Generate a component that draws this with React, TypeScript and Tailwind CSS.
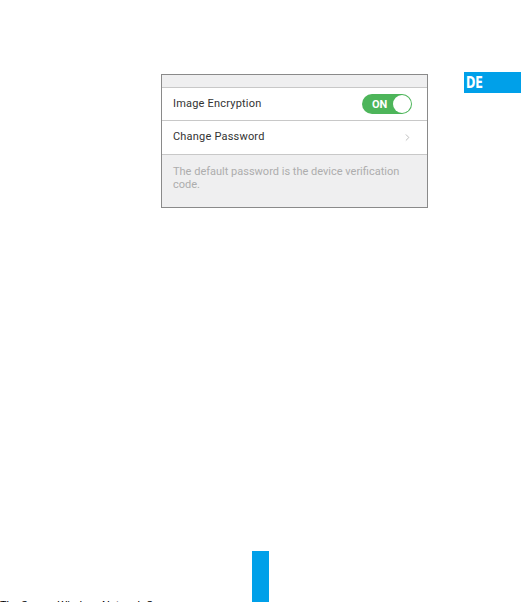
import { ChevronRight } from 'lucide-react';

const App = () => {
  return (
    <div className="w-[523px] h-[602px] overflow-hidden bg-white flex flex-col font-['Roboto',sans-serif]">
      {/* Top row: screenshot panel + language tab */}
      <div className="flex items-start pt-[72px]">
        <div className="ml-[161px] mt-[2px] w-[267px] border border-[#8a8a8a] bg-[#efeff0]">
          <div className="h-[13px] border-b border-[#c8c8c8]" />
          <div className="bg-white">
            <div className="h-[33px] flex items-center justify-between pl-[11px] pr-[15px] border-b border-[#c8c8c8]">
              <span className="text-[11px] text-[#333] tracking-[0.2px]">Image Encryption</span>
              <div className="w-[50px] h-[20px] rounded-full bg-[#4db55a] flex items-center justify-between pl-[10px] pr-[1px]">
                <span className="text-[11px] font-bold text-white leading-none">ON</span>
                <div className="w-[18px] h-[18px] rounded-full bg-white" />
              </div>
            </div>
            <div className="h-[34px] flex items-center justify-between pl-[11px] pr-[14px] border-b border-[#c8c8c8]">
              <span className="text-[11px] text-[#333] tracking-[0.2px]">Change Password</span>
              <ChevronRight className="w-[11px] h-[11px] text-[#b8b8b8]" strokeWidth={2} />
            </div>
          </div>
          <div className="h-[52px] pl-[11px] pr-[10px] pt-[10px] text-[11px] leading-[13px] text-[#adadad]">
            The default password is the device verification code.
          </div>
        </div>
        <div className="ml-auto mr-[2px] w-[57px] h-[21px] bg-[#00a0e9] flex items-center pl-[2px]">
          <span className="inline-block origin-left scale-x-[0.78] text-white font-bold text-[16px] leading-none font-['DejaVu_Sans_Condensed',sans-serif]">DE</span>
        </div>
      </div>

      <div className="flex-1" />

      {/* Bottom: page marker and the top edge of the next text line */}
      <div className="h-[51px] flex items-end shrink-0">
        <div className="w-[252px] h-[1px] overflow-hidden self-end">
          <div className="text-[11px] leading-[11px] text-black whitespace-nowrap -mt-[1px]">
            The Secure Wireless Network Camera
          </div>
        </div>
        <div className="w-[17px] h-[51px] bg-[#00a0e9]" />
      </div>
    </div>
  );
};

export default App;
